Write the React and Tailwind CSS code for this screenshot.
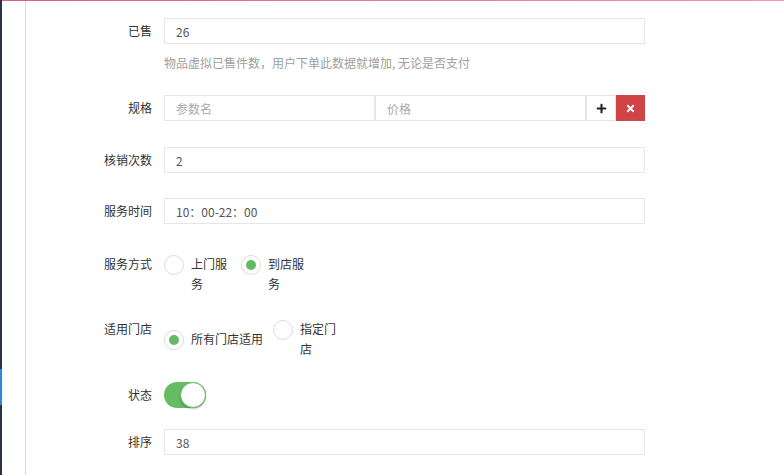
import { FaPlus, FaTimes } from 'react-icons/fa';

const font = "font-['Noto_Sans_CJK_SC','Noto_Sans',sans-serif]";

function Label({ children, className = '' }) {
    return (
        <div className={`w-[138px] shrink-0 pr-[12px] text-right text-[#333] ${className}`}>
            {children}
        </div>
    );
}

function TextInput({ value, placeholder, className = 'w-[481px]' }) {
    return (
        <input
            readOnly
            value={value ?? ''}
            placeholder={placeholder}
            className={`h-[26px] border border-[#e5e6e7] bg-white px-[11px] text-[12px] text-[#555] outline-none placeholder:text-[#a9a9a9] ${className}`}
        />
    );
}

function Radio({ checked, text, textWidth, className = '' }) {
    return (
        <div className={`flex items-start mr-[10px] ${className}`}>
            <span className="mt-[1px] flex h-[20px] w-[20px] shrink-0 items-center justify-center rounded-full border border-[#dcdcdc] bg-white">
                {checked && <span className="h-[10px] w-[10px] rounded-full bg-[#62bb62]" />}
            </span>
            <span className={`ml-[7px] leading-[20px] text-[#333] ${textWidth}`}>{text}</span>
        </div>
    );
}

export default function App() {
    return (
        <div className={`flex h-[475px] w-[784px] overflow-hidden bg-white text-[12px] ${font}`}>
            {/* sidebar edge */}
            <div className="flex w-[2px] shrink-0 flex-col">
                <div className="h-[369px] bg-[#2f3445]" />
                <div className="h-[36px] bg-[#2a8ad8]" />
                <div className="flex-1 bg-[#2f3445]" />
            </div>

            <div className="flex flex-1 flex-col">
                <div className="h-px bg-linear-to-r from-[#d45e8d] to-[#f592b6]" />
                <div className="flex flex-1">
                    <div className="w-[23px] shrink-0" />
                    <div className="flex-1 border-l border-[#dcdcdc] pt-[17px]">
                        {/* 已售 */}
                        <div className="mb-[23px] flex">
                            <Label className="leading-[26px]">已售</Label>
                            <div>
                                <TextInput value="26" />
                                <p className="mt-[10px] leading-[18px] text-[#a0a0a0]">
                                    物品虚拟已售件数，用户下单此数据就增加, 无论是否支付
                                </p>
                            </div>
                        </div>

                        {/* 规格 */}
                        <div className="mb-[26px] flex">
                            <Label className="leading-[26px]">规格</Label>
                            <div className="flex">
                                <TextInput placeholder="参数名" className="w-[211px]" />
                                <TextInput placeholder="价格" className="w-[211px]" />
                                <button className="flex h-[26px] w-[30px] items-center justify-center border border-[#e5e6e7] bg-white text-[#222]">
                                    <FaPlus size={11} />
                                </button>
                                <button className="flex h-[26px] w-[29px] items-center justify-center bg-[#d04447] text-white">
                                    <FaTimes size={11} />
                                </button>
                            </div>
                        </div>

                        {/* 核销次数 */}
                        <div className="mb-[25px] flex">
                            <Label className="leading-[26px]">核销次数</Label>
                            <TextInput value="2" />
                        </div>

                        {/* 服务时间 */}
                        <div className="mb-[30px] flex">
                            <Label className="leading-[26px]">服务时间</Label>
                            <TextInput value="10：00-22：00" />
                        </div>

                        {/* 服务方式 */}
                        <div className="mb-[25px] flex items-start">
                            <Label className="leading-[20px]">服务方式</Label>
                            <div className="flex items-center">
                                <Radio text="上门服务" textWidth="w-[40px]" />
                                <Radio checked text="到店服务" textWidth="w-[40px]" />
                            </div>
                        </div>

                        {/* 适用门店 */}
                        <div className="mb-[23px] flex items-start">
                            <Label className="leading-[20px]">适用门店</Label>
                            <div className="flex items-center">
                                <Radio checked text="所有门店适用" textWidth="" />
                                <Radio text="指定门店" textWidth="w-[40px]" />
                            </div>
                        </div>

                        {/* 状态 */}
                        <div className="mb-[21px] flex">
                            <Label className="leading-[26px]">状态</Label>
                            <div className="flex h-[26px] w-[42px] items-center justify-end rounded-full bg-[#64bd63]">
                                <span className="h-[26px] w-[26px] rounded-full border border-[#64bd63] bg-white shadow-[0_1px_2px_rgba(0,0,0,0.25)]" />
                            </div>
                        </div>

                        {/* 排序 */}
                        <div className="flex">
                            <Label className="leading-[26px]">排序</Label>
                            <TextInput value="38" />
                        </div>
                    </div>
                </div>
            </div>
        </div>
    );
}
